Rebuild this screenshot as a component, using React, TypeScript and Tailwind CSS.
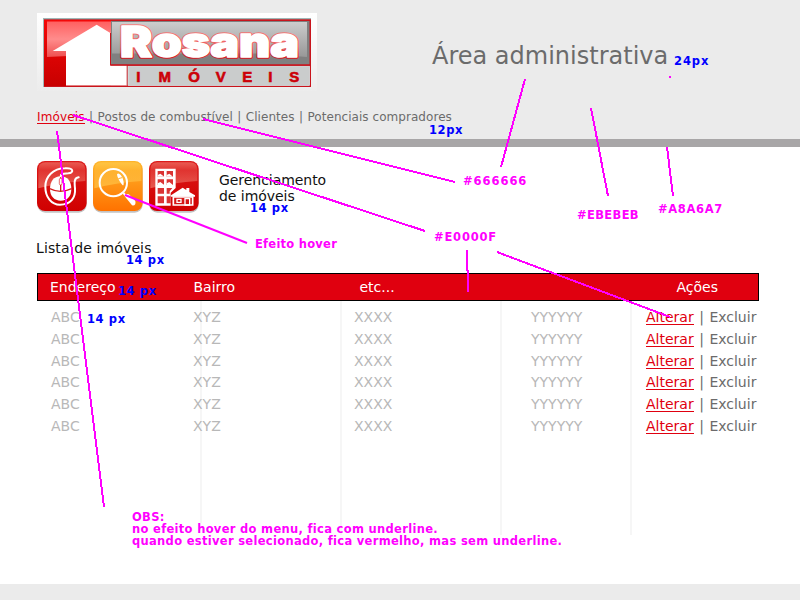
import React from "react";

const rows = [0, 1, 2, 3, 4, 5];

function Logo() {
  return (
    <svg width="280" height="79" viewBox="37 13 280 79" className="block">
      <defs>
        <linearGradient id="paper" x1="0" y1="0" x2="0" y2="1">
          <stop offset="0" stopColor="#fff" />
          <stop offset="1" stopColor="#ececec" />
        </linearGradient>
        <linearGradient id="brandRed" x1="0" y1="0" x2="0" y2="1">
          <stop offset="0" stopColor="#f40808" />
          <stop offset="1" stopColor="#c80000" />
        </linearGradient>
        <linearGradient id="gloss" x1="0" y1="0" x2="0" y2="1">
          <stop offset="0" stopColor="#ff6060" />
          <stop offset="0.5" stopColor="#ff8c8c" />
          <stop offset="1" stopColor="#ee5050" />
        </linearGradient>
        <linearGradient id="steel" x1="0" y1="0" x2="0" y2="1">
          <stop offset="0" stopColor="#cccccc" />
          <stop offset="1" stopColor="#989898" />
        </linearGradient>
        <linearGradient id="outline" x1="0" y1="0" x2="0" y2="1">
          <stop offset="0" stopColor="#f58c8c" />
          <stop offset="0.6" stopColor="#ee5c5c" />
          <stop offset="0.85" stopColor="#d01018" />
        </linearGradient>
      </defs>
      <rect x="37" y="13" width="280" height="78" fill="url(#paper)" />
      <rect x="43" y="18" width="268" height="69" fill="#9fb6b6" />
      <rect x="44" y="19.3" width="267" height="67.7" fill="#c9141c" />
      <rect x="44" y="20" width="67" height="66" fill="url(#brandRed)" />
      <path d="M47 21.5H111V54L47 57Z" fill="url(#gloss)" />
      <rect x="111" y="21" width="198.5" height="43.5" fill="#808080" />
      <path d="M112 22H307V57L262 53.5H112Z" fill="url(#steel)" />
      <rect x="111" y="64.5" width="199" height="1.8" fill="#c9141c" />
      <path d="M52.7 51 96.7 24.7 110.3 33V65.3H127V85.5H66V51Z" fill="#fff" />
      <path d="M110.5 33V65.3H127.2V85.5" fill="none" stroke="#c9141c" strokeWidth="1" />
      <rect x="128" y="66.3" width="181.6" height="19.2" fill="#cacccc" stroke="#d5eeee" strokeWidth=".7" />
      <g fontFamily="Inter, sans-serif" fontWeight="900" fontSize="42" fill="#fff" strokeLinejoin="round">
        <text x="120" y="57.2" textLength="179" lengthAdjust="spacingAndGlyphs" stroke="url(#outline)" strokeWidth="3.6">Rosana</text>
        <text aria-hidden="true" x="120" y="57.2" textLength="179" lengthAdjust="spacingAndGlyphs" stroke="#fff" strokeWidth="1.6">Rosana</text>
      </g>
      <text x="138.3 164.7 194 220.7 247.3 270.3 294.3" y="82" textAnchor="middle" fontFamily="Liberation Sans, Arial, sans-serif" fontWeight="700" fontSize="15" fill="#cc0008" stroke="#cc0008" strokeWidth=".6">IMÓVEIS</text>
    </svg>
  );
}

function Tile({ id, top, bottom, glossTop, children }: { id: string; top: string; bottom: string; glossTop: string; children: React.ReactNode }) {
  return (
    <svg width="52" height="54" viewBox="-3 -3 156 162" className="block">
      <defs>
        <linearGradient id={id} x1="0" y1="0" x2="0" y2="1">
          <stop offset="0" stopColor={top} />
          <stop offset="1" stopColor={bottom} />
        </linearGradient>
        <linearGradient id={id + "g"} x1="0" y1="0" x2="0" y2="1">
          <stop offset="0" stopColor={glossTop} stopOpacity=".55" />
          <stop offset="0.3" stopColor={glossTop} stopOpacity=".25" />
          <stop offset="1" stopColor={glossTop} stopOpacity=".6" />
        </linearGradient>
      </defs>
      <rect x="1" y="6" width="148" height="149" rx="24" fill="#888" opacity=".5" />
      <rect x="0" y="0" width="149" height="150" rx="24" fill={"url(#" + id + ")"} />
      <path d="M4 26Q4 4 26 4H123Q145 4 145 26V60Q75 64 4 82Z" fill={"url(#" + id + "g)"} />
      {children}
    </svg>
  );
}

function MouseIcon() {
  return (
    <Tile id="mouse" top="#dc1a1a" bottom="#d00000" glossTop="#f49080">
      <path d="M71 46C50 46 39 62 39 84C39 106 52 119 71 119C91 119 103 106 103 84C103 62 92 46 71 46Z" fill="#fff" />
      <path d="M38 83Q70 99 104 83M71 45V91" fill="none" stroke="#d42020" strokeWidth="4" />
      <rect x="67" y="52" width="8" height="20" rx="4" fill="#fff" stroke="#d42020" strokeWidth="2" />
      <path d="M71 46C71 36 82 38 94 37C112 35 110 20 84 22C48 22 25 47 25 77C25 108 43 131 69 131C101 131 116 111 114 83C112 63 111 51 125 49" fill="none" stroke="#fff" strokeWidth="6" strokeLinecap="round" />
    </Tile>
  );
}

function SearchIcon() {
  return (
    <Tile id="search" top="#ffb52a" bottom="#ff7200" glossTop="#ffd257">
      <circle cx="61" cy="65" r="41" fill="none" stroke="#fff" strokeWidth="6" />
      <path d="M72 40Q76 34 83 42Q93 54 92 70Q91 78 84 67Q73 51 72 40Z" fill="#fff" />
      <path d="M76 53 87 50" stroke="#ffae31" strokeWidth="3" />
      <path d="M91 96 101 106" stroke="#fff" strokeWidth="6" />
      <path d="M94 104Q103 95 110 102L127 120Q130 135 117 133Z" fill="#fff" />
    </Tile>
  );
}

function BuildingIcon() {
  return (
    <Tile id="building" top="#dc1a1a" bottom="#d00000" glossTop="#f49080">
      <path d="M19 23H80V81L65 95V134H19Z" fill="#fff" />
      <g fill="#db3434">
        <path d="M26 30H45V47H26ZM53 30H72V47H53ZM26 55H45V72H26ZM53 55H72V72H53ZM26 81H45V98H26ZM53 81H70L62 91V98H53ZM26 106H45V127H26ZM53 106H65V127H53Z" />
      </g>
      <g fill="#fff">
        <path d="M26 42 34 38 46 47H26ZM53 42 61 38 72 47H53ZM26 67 34 63 46 72H26ZM53 67 61 63 72 72H53Z" />
        <path d="M66 103 101 80 112 87V81H121V93L138 103V107H66Z" />
      </g>
      <path d="M73 108H131V132H73Z" fill="#d61515" stroke="#fff" strokeWidth="5" />
      <path d="M84 115H96V124H84ZM108 113H122V132H108Z" fill="none" stroke="#fff" strokeWidth="4" />
    </Tile>
  );
}

function Note({ children, className }: { children: React.ReactNode; className: string }) {
  return <div className={"absolute whitespace-nowrap font-bold leading-[12px] " + className}>{children}</div>;
}

function Annotations() {
  return (
    <div className="pointer-events-none absolute inset-0 text-[11.5px] tracking-[0.35px] text-[#ff00ff]">
      <svg width="800" height="600" viewBox="0 0 800 600" className="block" fill="none" stroke="#ff00ff" strokeWidth="2" shapeRendering="crispEdges">
        <path d="M57 131 104 507M73 115 425 231M203 119 455 182M525 79 501 167M591 108 608 196M667 147 673 196M467 250V271M468 270V292M497 252 670 317" />
        <path d="M125 195 247 243" shapeRendering="auto" />
        <path d="M669 77H671" />
      </svg>
      <Note className="left-[674px] top-[55px] tracking-[0.9px] text-[#0000ff]">24px</Note>
      <Note className="left-[429px] top-[124px] tracking-[0.6px] text-[#0000ff]">12px</Note>
      <Note className="left-[250px] top-[202px] tracking-[0.6px] text-[#0000ff]">14 px</Note>
      <Note className="left-[126px] top-[254px] tracking-[0.6px] text-[#0000ff]">14 px</Note>
      <Note className="left-[118px] top-[285px] tracking-[0.6px] text-[#0000ff]">14 px</Note>
      <Note className="left-[87px] top-[313px] tracking-[0.6px] text-[#0000ff]">14 px</Note>
      <Note className="left-[463px] top-[175px] tracking-[0.95px]">#666666</Note>
      <Note className="left-[434px] top-[231px] tracking-[0.8px]">#E0000F</Note>
      <Note className="left-[577px] top-[209px]">#EBEBEB</Note>
      <Note className="left-[658px] top-[203px] tracking-[0.65px]">#A8A6A7</Note>
      <Note className="left-[255px] top-[238px] tracking-[0.25px]">Efeito hover</Note>
      <Note className="left-[132px] top-[511px] tracking-[0.31px]">
        OBS:<br />no efeito hover do menu, fica com underline.<br />quando estiver selecionado, fica vermelho, mas sem underline.
      </Note>
    </div>
  );
}

export default function App() {
  return (
    <div className="relative flex h-[600px] w-[800px] flex-col overflow-hidden bg-white font-['DejaVu_Sans',Verdana,sans-serif]">
      <header className="h-[147px] shrink-0 border-b-8 border-[#a8a6a7] bg-[#ebebeb] pl-[37px] pt-[13px] text-[#6b6b6b]">
        <div className="flex">
          <Logo />
          <h1 className="ml-[115px] mt-[29px] whitespace-nowrap text-[24px] leading-[28px]">Área administrativa</h1>
        </div>
        <nav className="mt-[17px] flex gap-[4.4px] whitespace-nowrap text-[12px] leading-4 tracking-[0.05px]">
          <a className="h-[15px] border-b border-[#e0000f] tracking-[0.15px] text-[#e0000f]">Imóveis</a>
          <span>|</span>
          <a>Postos de combustível</a>
          <span>|</span>
          <a>Clientes</a>
          <span>|</span>
          <a>Potenciais compradores</a>
        </nav>
      </header>

      <main className="flex-1 pl-9 pt-[13px] text-[14px]">
        <section className="flex h-[54px] gap-1">
          <MouseIcon />
          <SearchIcon />
          <BuildingIcon />
          <h2 className="ml-[15px] mt-[12px] whitespace-nowrap leading-4 tracking-[-0.05px] text-[#111]">Gerenciamento<br />de imóveis</h2>
        </section>
        <h3 className="mt-[26px] leading-4 tracking-[0.12px] text-[#111]">Lista de imóveis</h3>

        <div className="ml-px mt-[17px] w-[722px]">
          <div className="grid h-7 grid-cols-[143.5px_166px_317px_1fr] items-center border border-black bg-[#e0000f] pl-3 text-white">
            <span>Endereço</span>
            <span>Bairro</span>
            <span>etc...</span>
            <span>Ações</span>
          </div>
          <div className="grid h-[234px] grid-cols-[165px_140px_160px_130px_1fr] text-[#b8b8b8]">
            <Column className="h-[222px] pl-[14px]" value="ABC" />
            <Column className="-ml-[9px] pl-0" value="XYZ" />
            <Column className="pl-[12px]" value="XXXX" />
            <Column className="pl-[29px]" value="YYYYYY" />
            <div className="pl-[14px] pt-[5px]">
              {rows.map((r) => (
                <div key={r} className="flex h-[21.8px] gap-[5.5px] whitespace-nowrap leading-[22px] text-[#6b6b6b]">
                  <a className="h-[19px] border-b border-[#e0000f] text-[#e0000f]">Alterar</a>
                  <span>|</span>
                  <a>Excluir</a>
                </div>
              ))}
            </div>
          </div>
        </div>
      </main>

      <footer className="h-4 shrink-0 bg-[#ebebeb]" />
      <Annotations />
    </div>
  );
}

function Column({ value, className }: { value: string; className: string }) {
  return (
    <div className={"border-r-2 border-[#f6f6f6] pt-[5px] " + className}>
      {rows.map((r) => (
        <div key={r} className="h-[21.8px] leading-[22px]">{value}</div>
      ))}
    </div>
  );
}
